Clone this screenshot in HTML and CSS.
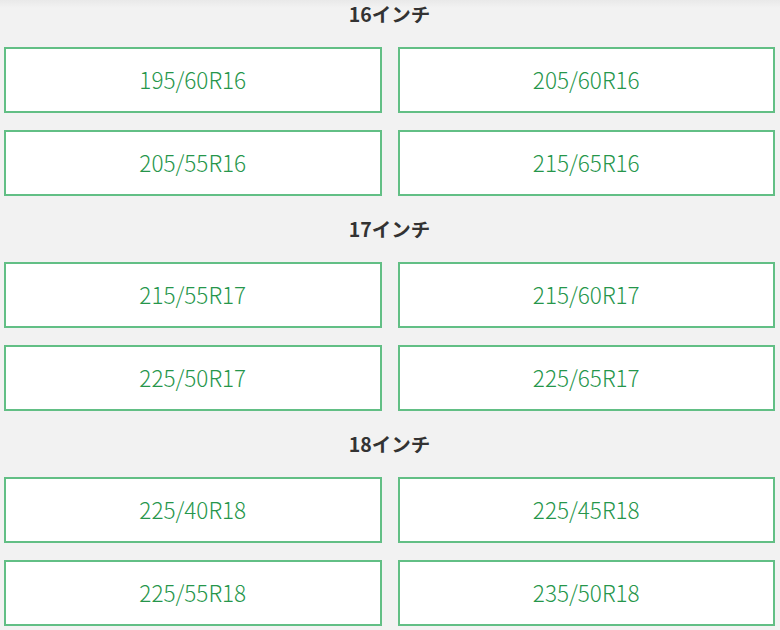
FILE: index.html
```html
<!DOCTYPE html>
<html lang="ja">
<head>
    <meta charset="UTF-8">
    <meta name="viewport" content="width=device-width, initial-scale=1.0">
    <title>タイヤサイズ</title>
    <link rel="stylesheet" href="styles.css">
</head>
<body>
    <div class="sizes">
        <section class="inch">
            <h2 class="inch-title">16インチ</h2>
            <div class="size-grid">
                <a class="size" href="#">195/60R16</a>
                <a class="size" href="#">205/60R16</a>
                <a class="size" href="#">205/55R16</a>
                <a class="size" href="#">215/65R16</a>
            </div>
        </section>

        <section class="inch">
            <h2 class="inch-title">17インチ</h2>
            <div class="size-grid">
                <a class="size" href="#">215/55R17</a>
                <a class="size" href="#">215/60R17</a>
                <a class="size" href="#">225/50R17</a>
                <a class="size" href="#">225/65R17</a>
            </div>
        </section>

        <section class="inch">
            <h2 class="inch-title">18インチ</h2>
            <div class="size-grid">
                <a class="size" href="#">225/40R18</a>
                <a class="size" href="#">225/45R18</a>
                <a class="size" href="#">225/55R18</a>
                <a class="size" href="#">235/50R18</a>
            </div>
        </section>
    </div>
</body>
</html>
```

FILE: styles.css
```css
body {
    margin: 0;
    background: #f2f2f2 linear-gradient(#e9e9e9, #f2f2f2 8px) no-repeat;
    font-family: "Noto Sans CJK JP", "Noto Sans", sans-serif;
}

.sizes {
    padding: 0 5px 0 4px;
}

.inch + .inch {
    margin-top: 19px;
}

.inch-title {
    margin: 0 0 19px;
    height: 28px;
    line-height: 28px;
    text-align: center;
    font-size: 19.5px;
    font-weight: 700;
    color: #333333;
}

.size-grid {
    display: grid;
    grid-template-columns: 1fr 1fr;
    column-gap: 16px;
    row-gap: 17px;
}

.size {
    display: flex;
    align-items: center;
    justify-content: center;
    height: 66px;
    padding-bottom: 3px;
    box-sizing: border-box;
    background: #ffffff;
    border: 2px solid #62bf85;
    color: #26964b;
    font-size: 22.5px;
    font-weight: 300;
    text-decoration: none;
}
```
